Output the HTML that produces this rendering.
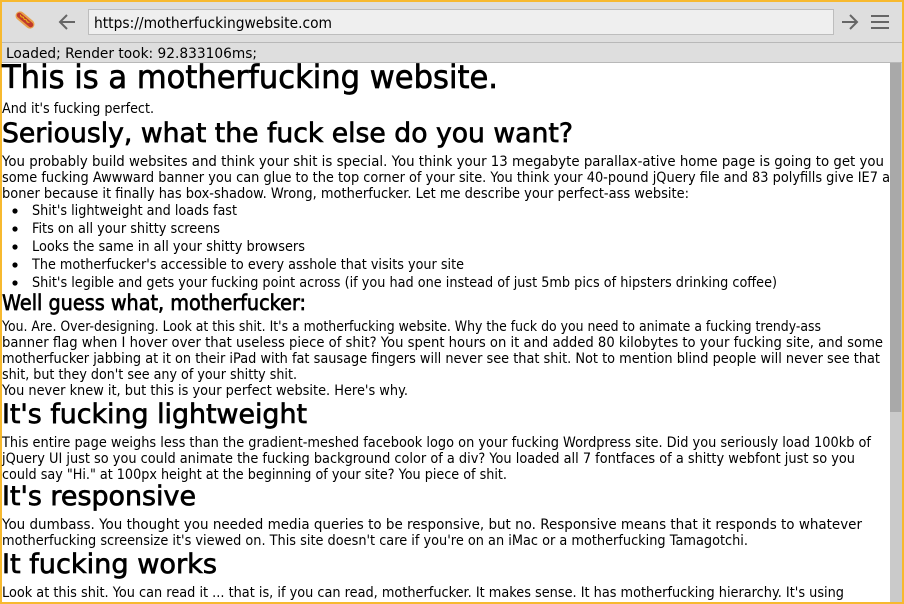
<!DOCTYPE html>
<html><head><meta charset="utf-8"><style>
html,body{margin:0;padding:0;width:904px;height:604px;overflow:hidden;background:#fff}
svg{display:block}
text{font-family:"DejaVu Sans","Liberation Sans",sans-serif;fill:#000}
.h{stroke:#000;stroke-width:0.7}
</style></head><body>
<svg width="904" height="604" viewBox="0 0 904 604" xmlns="http://www.w3.org/2000/svg">
<rect x="0" y="0" width="904" height="604" fill="#f7b92f"/>
<rect x="2" y="2" width="900" height="600" fill="#fff"/>
<rect x="2" y="2" width="900" height="40" fill="#dedede"/>
<rect x="2" y="42" width="900" height="1" fill="#b8b8b8"/>
<rect x="2" y="43" width="900" height="19" fill="#dedede"/>
<rect x="2" y="62" width="900" height="1" fill="#b8b8b8"/>
<g transform="translate(25,20) rotate(40)">
<rect x="-11" y="-4.5" width="22" height="9" rx="4.5" fill="#e9a04b"/>
<rect x="-10" y="-2.5" width="20" height="5" rx="2.5" fill="#c0392b"/>
<path d="M-7 -1 l2 1 l2 -1 l2 1 l2 -1 l2 1 l2 -1" stroke="#f1c40f" stroke-width="1" fill="none"/>
</g>
<path d="M75 22 H60 M67 15 L60 22 L67 29" stroke="#666" stroke-width="2" fill="none"/>
<rect x="88.5" y="9.5" width="745" height="25" fill="#efefef" stroke="#bdbdbd"/>
<text x="94" y="28" font-size="15" textLength="238" lengthAdjust="spacingAndGlyphs" fill="#333">https://motherfuckingwebsite.com</text>
<path d="M842 22 H857 M850 15 L857 22 L850 29" stroke="#666" stroke-width="2" fill="none"/>
<path d="M871 16 H889 M871 22 H889 M871 28 H889" stroke="#666" stroke-width="2"/>
<text x="6" y="58" font-size="14" textLength="251" lengthAdjust="spacingAndGlyphs" fill="#222">Loaded; Render took: 92.833106ms;</text>
<rect x="890" y="63" width="12" height="539" fill="#cacaca"/>
<rect x="890" y="63" width="11" height="349" fill="#a9a9a9"/>
<g font-size="14">
<text class="h" x="2" y="88" font-size="32" textLength="496" lengthAdjust="spacingAndGlyphs">This is a motherfucking website.</text>
<text x="2" y="113" textLength="152" lengthAdjust="spacingAndGlyphs">And it's fucking perfect.</text>
<text class="h" x="2" y="142" font-size="27" textLength="571" lengthAdjust="spacingAndGlyphs">Seriously, what the fuck else do you want?</text>
<text x="2" y="166" textLength="882" lengthAdjust="spacingAndGlyphs">You probably build websites and think your shit is special. You think your 13 megabyte parallax-ative home page is going to get you</text>
<text x="2" y="182" textLength="888" lengthAdjust="spacingAndGlyphs">some fucking Awwward banner you can glue to the top corner of your site. You think your 40-pound jQuery file and 83 polyfills give IE7 a</text>
<text x="2" y="198" textLength="687" lengthAdjust="spacingAndGlyphs">boner because it finally has box-shadow. Wrong, motherfucker. Let me describe your perfect-ass website:</text>
<circle cx="15" cy="211" r="2.6"/><text x="32" y="215" textLength="205" lengthAdjust="spacingAndGlyphs">Shit's lightweight and loads fast</text>
<circle cx="15" cy="229" r="2.6"/><text x="32" y="233" textLength="188" lengthAdjust="spacingAndGlyphs">Fits on all your shitty screens</text>
<circle cx="15" cy="247" r="2.6"/><text x="32" y="251" textLength="273" lengthAdjust="spacingAndGlyphs">Looks the same in all your shitty browsers</text>
<circle cx="15" cy="265" r="2.6"/><text x="32" y="269" textLength="432" lengthAdjust="spacingAndGlyphs">The motherfucker's accessible to every asshole that visits your site</text>
<circle cx="15" cy="283" r="2.6"/><text x="32" y="287" textLength="745" lengthAdjust="spacingAndGlyphs">Shit's legible and gets your fucking point across (if you had one instead of just 5mb pics of hipsters drinking coffee)</text>
<text class="h" x="2" y="310" font-size="21" textLength="304" lengthAdjust="spacingAndGlyphs">Well guess what, motherfucker:</text>
<text x="2" y="331" textLength="819" lengthAdjust="spacingAndGlyphs">You. Are. Over-designing. Look at this shit. It's a motherfucking website. Why the fuck do you need to animate a fucking trendy-ass</text>
<text x="2" y="347" textLength="881" lengthAdjust="spacingAndGlyphs">banner flag when I hover over that useless piece of shit? You spent hours on it and added 80 kilobytes to your fucking site, and some</text>
<text x="2" y="363" textLength="878" lengthAdjust="spacingAndGlyphs">motherfucker jabbing at it on their iPad with fat sausage fingers will never see that shit. Not to mention blind people will never see that</text>
<text x="2" y="379" textLength="295" lengthAdjust="spacingAndGlyphs">shit, but they don't see any of your shitty shit.</text>
<text x="2" y="395" textLength="406" lengthAdjust="spacingAndGlyphs">You never knew it, but this is your perfect website. Here's why.</text>
<text class="h" x="2" y="423" font-size="27" textLength="305" lengthAdjust="spacingAndGlyphs">It's fucking lightweight</text>
<text x="2" y="447" textLength="869" lengthAdjust="spacingAndGlyphs">This entire page weighs less than the gradient-meshed facebook logo on your fucking Wordpress site. Did you seriously load 100kb of</text>
<text x="2" y="463" textLength="853" lengthAdjust="spacingAndGlyphs">jQuery UI just so you could animate the fucking background color of a div? You loaded all 7 fontfaces of a shitty webfont just so you</text>
<text x="2" y="479" textLength="505" lengthAdjust="spacingAndGlyphs">could say "Hi." at 100px height at the beginning of your site? You piece of shit.</text>
<text class="h" x="2" y="505" font-size="27" textLength="194" lengthAdjust="spacingAndGlyphs">It's responsive</text>
<text x="2" y="529" textLength="860" lengthAdjust="spacingAndGlyphs">You dumbass. You thought you needed media queries to be responsive, but no. Responsive means that it responds to whatever</text>
<text x="2" y="545" textLength="746" lengthAdjust="spacingAndGlyphs">motherfucking screensize it's viewed on. This site doesn't care if you're on an iMac or a motherfucking Tamagotchi.</text>
<text class="h" x="2" y="573" font-size="27" textLength="215" lengthAdjust="spacingAndGlyphs">It fucking works</text>
<text x="2" y="597" textLength="842" lengthAdjust="spacingAndGlyphs">Look at this shit. You can read it ... that is, if you can read, motherfucker. It makes sense. It has motherfucking hierarchy. It's using</text>
</g>
</svg>
</body></html>
